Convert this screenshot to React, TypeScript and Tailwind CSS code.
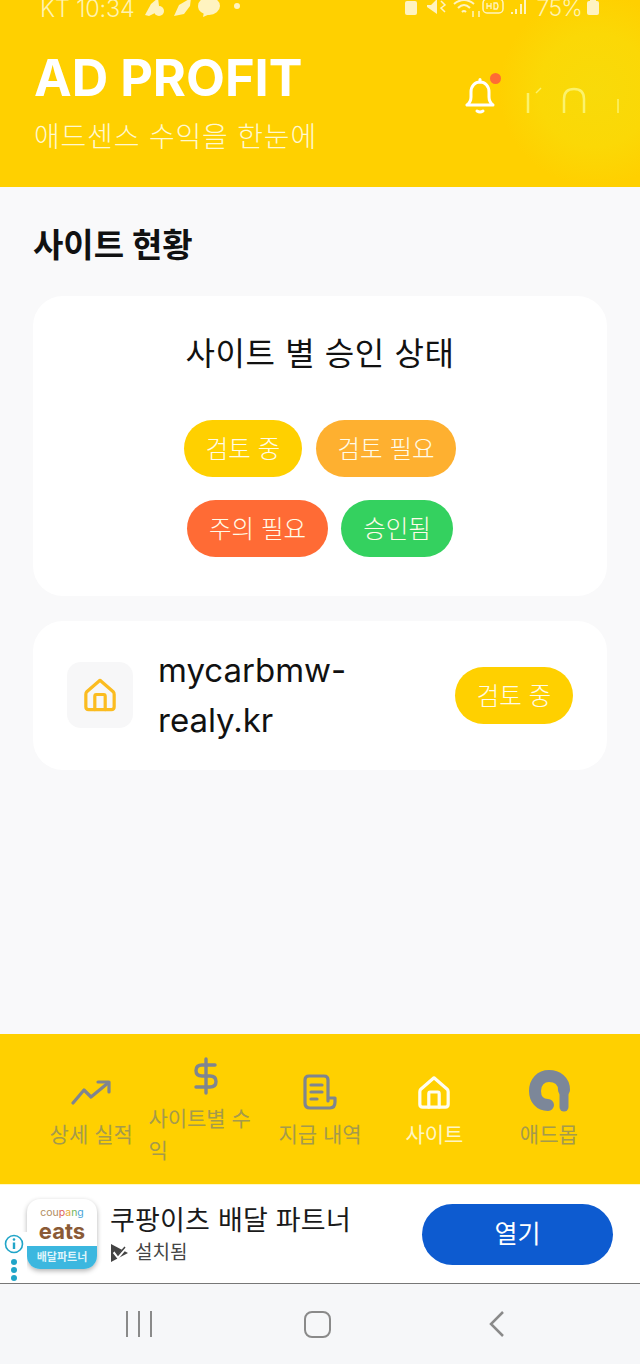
import React from "react";

const font = { fontFamily: '"Inter","Noto Sans CJK KR","Noto Sans",sans-serif' };

function HouseIcon({ className, color }: { className?: string; color: string }) {
  return (
    <svg viewBox="0 0 36 36" className={className} fill="none" stroke={color} strokeWidth="3.4" strokeLinejoin="round" strokeLinecap="round">
      <path d="M18 3 L32 15 Q33 16 33 18 V31 Q33 34 30 34 H6 Q3 34 3 31 V18 Q3 16 4 15 Z" />
      <path d="M12.500 34 V20 Q12.500 18 14 18 H22 Q23.500 18 23.500 20 V34" />
    </svg>
  );
}

function Pill({ label, bg, className }: { label: string; bg: string; className: string }) {
  return (
    <span className={`flex h-[57px] items-center justify-center rounded-full pt-[2px] text-[24.500px] font-light leading-none text-[#fffbe8] ${bg} ${className}`}>
      {label}
    </span>
  );
}

function NavItem({ label, icon, active, left }: { label: string; icon: React.ReactNode; active?: boolean; left?: boolean }) {
  return (
    <div className="flex w-[114.5px] flex-col items-center">
      <div className="flex h-[44px] items-center justify-center">{icon}</div>
      <span className={`mt-[5px] w-full text-[21px] font-normal leading-[32px] ${left ? "text-left" : "text-center"} ${active ? "text-[#fff6c4]" : "text-[#a59a4c]"}`}>
        {label}
      </span>
    </div>
  );
}

export default function App() {
  return (
    <div style={font} className="flex h-[1364px] w-[640px] flex-col overflow-hidden bg-[#f9f9fa]">
      <header className="relative h-[187px] shrink-0 overflow-hidden bg-[#ffd000]">
        <div className="absolute left-[490px] top-[-5px] h-[190px] w-[210px] rounded-full bg-[radial-gradient(circle,#f8da0a_0%,#fbd806_40%,#ffd00000_68%)]" />
        <div className="relative flex h-[22px] items-center justify-between pl-[40px] pr-[40px]">
          <div className="-mt-[5px] flex items-center text-[#fff3b0]">
            <span className="text-[23.500px] font-light leading-none tracking-[-0.2px]">KT 10:34</span>
            <svg width="100" height="20" viewBox="0 0 100 20" className="ml-[9px] -mt-[3px]">
              <path d="M1 18 L7 7 L14 1 L15 9 L11 16 L5 19 Z" fill="#fff3c0" />
              <circle cx="15" cy="14" r="5" fill="#fff3c0" />
              <path d="M30 19 L35 8 L47 1 L46 9 L40 17 Z" fill="#fff3c0" />
              <ellipse cx="65" cy="9" rx="11" ry="9" fill="#fff3c0" />
              <path d="M60 15 L59 20 L66 17 Z" fill="#fff3c0" />
              <circle cx="93" cy="9" r="3" fill="#fff3c0" />
            </svg>
          </div>
          <div className="-mt-[6px] flex items-center text-[#fff3b0]">
            <svg width="123" height="20" viewBox="0 0 123 20" fill="none" stroke="#fff3c0">
              <rect x="1" y="3" width="12" height="14" rx="2" fill="#fff3c0" stroke="none" />
              <path d="M23 7 H27 L33 1 V16 L23 9 Z" fill="#fff3c0" stroke="none" />
              <path d="M37 3 L41 7 L37 10 L41 14" strokeWidth="1.5" />
              <path d="M50 6 Q60 -2 70 6 M54 10 Q60 4 66 10 M58 14 Q60 12 62 14" strokeWidth="2" />
              <path d="M69 13 V19 M75 19 V13" strokeWidth="1.500" />
              <rect x="79" y="1" width="20" height="14" rx="4" strokeWidth="1.5" />
              <path d="M83 5 V11 M83 8 H87 M87 5 V11 M90 5 V11 H93 Q95 8 93 5 Z" strokeWidth="1.3" />
              <path d="M108 16 V14 M112 16 V11 M117 16 V6 M121 16 V1" strokeWidth="2" />
            </svg>
            <span className="ml-[10px] text-[23px] font-light leading-none tracking-[-0.8px]">75%</span>
            <svg width="14" height="20" viewBox="0 0 14 20" className="ml-[4px]">
              <rect x="4" y="0" width="6" height="3" fill="#fff3c0" />
              <rect x="1" y="3" width="12" height="14" rx="2" fill="#fff3c0" />
            </svg>
          </div>
        </div>
        <div className="relative flex items-center justify-between pl-[34px]">
          <div>
            <h1 className="mt-[23px] text-[50.500px] font-bold leading-[66px] text-white">AD PROFIT</h1>
            <p className="mt-[6px] text-[28px] font-light leading-[40px] tracking-[0.8px] text-[#fff8d0]">애드센스 수익을 한눈에</p>
          </div>
          <div className="mr-[20px] mt-[13px] flex items-center gap-[31px]">
            <div className="relative">
              <svg width="30" height="36" viewBox="0 0 30 36" fill="none" stroke="#fff" strokeWidth="3" strokeLinecap="round" strokeLinejoin="round">
                <path d="M2 27 H28 Q24 24 24 19 V14 C24 8 20 4 15 4 C10 4 6 8 6 14 V19 Q6 24 2 27 Z" />
                <path d="M15 1.5 V4" />
                <path d="M12 33 Q15 35 18 33" />
              </svg>
              <span className="absolute -right-[6px] -top-[5px] h-[11px] w-[11px] rounded-full bg-[#ff6b35]" />
            </div>
            <svg width="94" height="28" viewBox="0 0 94 28" fill="none" stroke="#fbf26c" strokeWidth="2.5" className="mt-[10px]">
              <path d="M2 6 V26" />
              <path d="M15 1 L10 6" strokeWidth="1.5" />
              <path d="M38 26 V12 Q38 2 48 2 Q58 2 58 12 V26" />
              <path d="M92 12 V26" strokeWidth="1.5" />
            </svg>
          </div>
        </div>
      </header>

      <main className="flex-1 px-[33px]">
        <h2 className="mt-[36px] text-[33px] font-bold leading-[44px] text-[#111]">사이트 현황</h2>
        <section className="mt-[29px] flex h-[300px] flex-col items-center rounded-[30px] bg-white">
          <h3 className="mt-[33px] text-[32px] font-normal leading-[50px] tracking-[0.6px] text-[#111]">사이트 별 승인 상태</h3>
          <div className="mt-[41px] flex gap-[14px]">
            <Pill label="검토 중" bg="bg-[#ffd000]" className="w-[118px]" />
            <Pill label="검토 필요" bg="bg-[#feb030]" className="w-[140px]" />
          </div>
          <div className="mt-[23px] flex gap-[13px]">
            <Pill label="주의 필요" bg="bg-[#ff6b35]" className="w-[141px]" />
            <Pill label="승인됨" bg="bg-[#34d15f]" className="w-[112px]" />
          </div>
        </section>
        <section className="mt-[25px] flex h-[149px] items-center rounded-[30px] bg-white pl-[34px] pr-[34px]">
          <div className="-mt-[2px] flex h-[66px] w-[66px] shrink-0 items-center justify-center rounded-[14px] bg-[#f7f7f8]">
            <HouseIcon className="h-[35px] w-[34px]" color="#fbbc20" />
          </div>
          <p className="-mt-[1px] ml-[25px] w-[200px] flex-1 break-words text-[33px] leading-[50px] text-[#111]">
            mycarbmw-
            <br />
            realy.kr
          </p>
          <Pill label="검토 중" bg="bg-[#ffd000]" className="w-[118px] shrink-0" />
        </section>
      </main>

      <nav className="flex h-[150px] shrink-0 items-center justify-center bg-[#ffd000] px-[34px] pb-[2px] pt-[5px]">
        <NavItem
          label="상세 실적"
          icon={
            <svg width="40" height="25" viewBox="0 0 40 25" fill="none" stroke="#7f8590" strokeWidth="3.2" strokeLinecap="round" strokeLinejoin="round">
              <path d="M2 23 L13 10 L20 17 L37 3" />
              <path d="M27 2 H38 V12" />
            </svg>
          }
        />
        <NavItem
          label="사이트별 수익"
          left
          icon={
            <svg width="24" height="38" viewBox="0 0 24 38" fill="none" stroke="#7f8590" strokeWidth="3.4" strokeLinecap="round" className="mt-[-1px]">
              <path d="M12 2 V36" />
              <path d="M21 8 H8 Q2 8 2 13.500 Q2 19 8 19 H16 Q22 19 22 24.500 Q22 30 16 30 H2" />
            </svg>
          }
        />
        <NavItem
          label="지급 내역"
          icon={
            <svg width="34" height="36" viewBox="0 0 34 36" fill="none" stroke="#7f8590" strokeWidth="3.2" strokeLinecap="round" strokeLinejoin="round">
              <path d="M25 27 V6 Q25 2 21 2 H6 Q2 2 2 6 V29 Q2 34 7 34 H27 Q32 34 32 28 V24 H26" />
              <path d="M8 11 H19 M8 18 H19 M8 25 H14" />
            </svg>
          }
        />
        <NavItem label="사이트" active icon={<HouseIcon className="h-[36px] w-[34px]" color="#fffdf0" />} />
        <NavItem
          label="애드몹"
          icon={
            <svg width="42" height="43" viewBox="0 0 42 43" fill="none" stroke="#7c8799" strokeLinecap="round" className="-mt-[2px]">
              <path d="M36 37 V19" strokeWidth="9" />
              <path d="M36 20 C36 11 29 6 21 6 C13 6 7 12 7 21 C7 29 12 35 20 35" strokeWidth="12" />
            </svg>
          }
        />
      </nav>

      <div className="relative flex h-[99px] shrink-0 items-center border-t border-[#fff8c8] bg-white">
        <div className="ml-[27px] flex h-[70px] w-[70px] flex-col overflow-hidden rounded-[13px] bg-white shadow-[0_2px_5px_rgba(0,0,0,0.3)]">
          <div className="flex h-[47px] flex-col items-center justify-center pt-[2px]">
            <span className="text-[10.500px] leading-[14px] text-[#b08d60]">
              cou<span className="text-[#e0645a]">p</span>
              <span className="text-[#e6a83a]">a</span>
              <span className="text-[#6fb45a]">n</span>
              <span className="text-[#4aa3d8]">g</span>
            </span>
            <span className="text-[22px] font-bold leading-[22px] text-[#8a5a36]">eats</span>
          </div>
          <div className="flex flex-1 items-center justify-center bg-[#3cb7df] text-[11px] font-bold text-[#dff4fb]">배달파트너</div>
        </div>
        <div className="ml-[13px]">
          <p className="-mt-[1px] text-[27px] font-normal leading-[38px] tracking-[0.2px] text-[#1a1a1a]">쿠팡이츠 배달 파트너</p>
          <div className="flex items-center gap-[6px]">
            <svg width="19" height="20" viewBox="0 0 19 20">
              <path d="M1 1 L18 10 L1 19 Z" fill="#444" />
              <path d="M4 9 L8 14 L17 3" fill="none" stroke="#fff" strokeWidth="3" />
              <path d="M5 8 L8 12 L15 4" fill="none" stroke="#444" strokeWidth="1.500" />
            </svg>
            <span className="text-[19px] leading-[26px] text-[#444]">설치됨</span>
          </div>
        </div>
        <button className="ml-auto mr-[27px] h-[61px] w-[191px] rounded-full bg-[#0d5bd0] pt-[2px] text-[25px] font-normal text-white">열기</button>
        <div className="absolute bottom-0 left-0 flex h-[51px] w-[27px] flex-col items-center bg-white pl-[1px] pt-[2px]">
          <svg width="20" height="20" viewBox="0 0 20 20" fill="none" stroke="#21a5c8" strokeWidth="1.6">
            <circle cx="10" cy="10" r="8.500" />
            <path d="M10 8.500 V15" strokeWidth="2.400" />
            <circle cx="10" cy="5.500" r="1.300" fill="#21a5c8" stroke="none" />
          </svg>
          <div className="mt-[5px] flex flex-col gap-[2.500px]">
            <span className="h-[5.500px] w-[5.500px] rounded-full bg-[#21a5c8]" />
            <span className="h-[5.500px] w-[5.500px] rounded-full bg-[#21a5c8]" />
            <span className="h-[5.500px] w-[5.500px] rounded-full bg-[#21a5c8]" />
          </div>
        </div>
      </div>

      <div className="flex h-[81px] shrink-0 items-center border-t border-[#777] bg-[#f6f7f9]">
        <div className="ml-[126px] flex h-[26px] w-[26px] justify-between">
          <span className="h-full w-[2px] bg-[#8a8a8a]" />
          <span className="h-full w-[2px] bg-[#8a8a8a]" />
          <span className="h-full w-[2px] bg-[#8a8a8a]" />
        </div>
        <div className="ml-[152px] h-[27px] w-[27px] rounded-[8px] border-[2.5px] border-[#8a8a8a]" />
        <svg width="18" height="28" viewBox="0 0 18 28" fill="none" stroke="#8a8a8a" strokeWidth="2.500" className="ml-[157px]">
          <path d="M15 2 L3 14 L15 26" />
        </svg>
      </div>
    </div>
  );
}
